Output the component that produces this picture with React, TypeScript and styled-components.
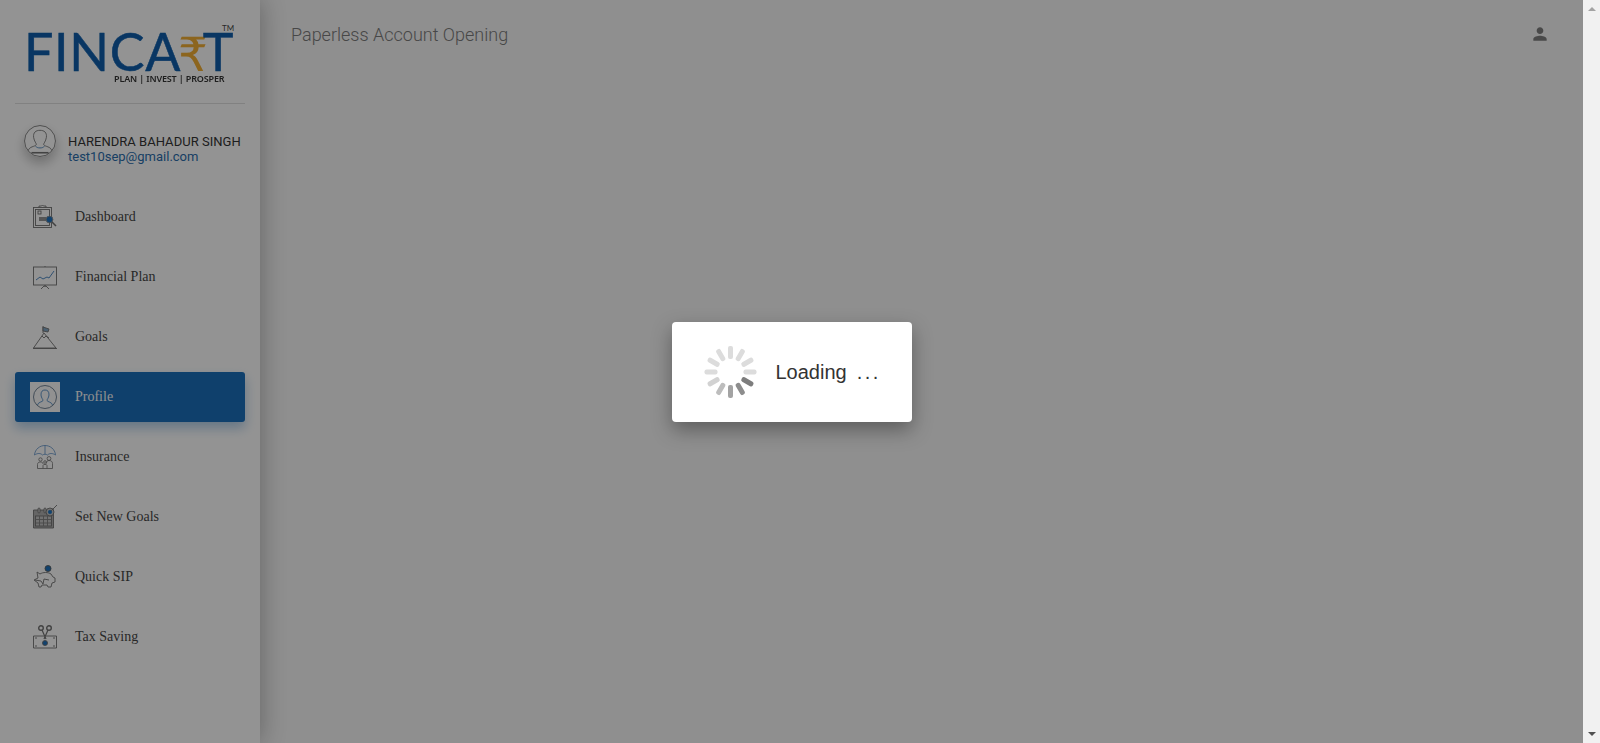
import React from 'react';
import styled, {createGlobalStyle} from 'styled-components';

const GlobalStyle = createGlobalStyle`
  html, body {
    margin: 0;
    padding: 0;
    height: 100%;
    overflow: hidden;
  }
  body {
    background: #eeeeee;
    font-family: Roboto, "Liberation Sans", sans-serif;
  }
`;

const line = '#6e6e6e';
const blue = '#1d6fb8';

const DashboardIcon = () => (
  <svg width="24" height="24" viewBox="0 0 24 24" fill="none" stroke={line} strokeWidth="0.9">
    <rect x="0.5" y="2.5" width="18" height="20" />
    <rect x="2.5" y="4.5" width="14" height="16" />
    <path d="M6 2.5V1h2.5L9.5 0l1 1H13v1.5" />
    <rect x="5" y="6" width="3" height="3" />
    <path d="M6 13h7M6 15h7" strokeWidth="1.6" />
    <circle cx="16.5" cy="14.5" r="3.4" fill={blue} stroke="#8a8a8a" />
    <path d="M19 17l4 4" strokeWidth="1.6" />
  </svg>
);

const PlanIcon = () => (
  <svg width="24" height="24" viewBox="0 0 24 24" fill="none" stroke={line} strokeWidth="0.9">
    <rect x="0.5" y="2" width="23" height="18" />
    <path d="M12 1v1M12 20v2M8 24l3-3h2l3 3" />
    <path d="M3 15l4-3 3 2 4-2 2 1 5-7" stroke="#4f86bd" strokeWidth="1" />
  </svg>
);

const GoalsIcon = () => (
  <svg width="24" height="24" viewBox="0 0 24 24" fill="none" stroke={line} strokeWidth="0.9">
    <path d="M0.5 23L11 8l12 15zM0 23.5h24" />
    <path d="M9 11l2 2 2-2 3 2" />
    <path d="M10 8V1" />
    <path d="M10 2l6 2-1 3-5-1z" fill="#7ea0bd" />
  </svg>
);

const ProfileIcon = () => (
  <svg width="24" height="24" viewBox="0 0 24 24" fill="none" stroke="#4f6478" strokeWidth="0.8">
    <circle cx="12" cy="12" r="11.5" />
    <path
      d="M4.5 20c.5-3 5-3 5.500-4.500.2-1-1.800-2.500-2-5.500C7.800 6.500 9.500 5 12 5s4.200 1.500 4 5c-.2 3-2.200 4.500-2 5.500.5 1.500 5 1.500 5.500 4.500"
      stroke="#3a78b5"
    />
  </svg>
);

const InsuranceIcon = () => (
  <svg width="24" height="24" viewBox="0 0 24 24" fill="none" stroke={line} strokeWidth="0.8">
    <path d="M1.500 10C2 4 7 .5 12 .5S22 4 22.500 10M1.500 10c3-2 6-2 8 0 1.500-1 3.500-1 5 0 2-2 5-2 8 0" stroke="#5a8cc0" />
    <path d="M12 .5V9" stroke="#5a8cc0" />
    <circle cx="7.500" cy="14.500" r="1.700" />
    <circle cx="16" cy="13.500" r="1.900" />
    <circle cx="12" cy="17" r="1.300" />
    <path d="M4.500 23.500v-4c0-1.500 1-2.500 3-2.500s2.500 1 2.500 2M19.500 23.500v-5c0-2-1.500-3-3.500-3s-2.500 1-2.500 3M10 23.500v-3c0-1.500 4-1.500 4 0v3M4.500 23.500h15" />
  </svg>
);

const SetGoalsIcon = () => (
  <svg width="24" height="24" viewBox="0 0 24 24" fill="none" stroke={line} strokeWidth="0.9">
    <path d="M0.500 5h20v18h-20z" fill="#a8a8a8" />
    <rect x="2.500" y="11" width="16" height="10" fill="#bdbdbd" />
    <path d="M2.500 14.500h16M2.500 18h16M6.500 11v10M10.500 11v10M14.500 11v10" stroke="#7a7a7a" />
    <rect x="5" y="3" width="2" height="5" rx="1" fill="#ccc" />
    <rect x="11" y="3" width="2" height="5" rx="1" fill="#ccc" />
    <circle cx="17" cy="7" r="4" fill="#bbb" />
    <circle cx="17" cy="7" r="2" fill={blue} stroke="none" />
    <path d="M18 6l6-6" />
  </svg>
);

const SipIcon = () => (
  <svg width="24" height="24" viewBox="0 0 24 24" fill="none" stroke={line} strokeWidth="0.9">
    <path d="M4 7l3 2c3-2 8-2 11 0l2 3 2 1v4l-3 1-1 4h-3l-1-2H9l-1 2H6l-1-4-4-3 4-2z" />
    <path d="M2 15l6 1 2 3 1-5 5 1" />
    <circle cx="15" cy="3.500" r="3" fill={blue} stroke="#5a5a5a" />
  </svg>
);

const TaxIcon = () => (
  <svg width="24" height="24" viewBox="0 0 24 24" fill="none" stroke={line} strokeWidth="0.9">
    <path d="M0.500 11h23v12h-23z" />
    <circle cx="8" cy="3" r="2.300" strokeWidth="1.400" />
    <circle cx="16" cy="3" r="2.300" strokeWidth="1.400" />
    <path d="M9 5l4 9M15 5l-4 9" strokeWidth="1.200" />
    <circle cx="12" cy="18" r="2.500" fill={blue} />
    <path d="M2 13h2M20 13h2M2 21h2M20 21h2" />
  </svg>
);

const navItems = [
  {label: 'Dashboard', icon: <DashboardIcon />},
  {label: 'Financial Plan', icon: <PlanIcon />},
  {label: 'Goals', icon: <GoalsIcon />},
  {label: 'Profile', icon: <ProfileIcon />, active: true},
  {label: 'Insurance', icon: <InsuranceIcon />},
  {label: 'Set New Goals', icon: <SetGoalsIcon />},
  {label: 'Quick SIP', icon: <SipIcon />},
  {label: 'Tax Saving', icon: <TaxIcon />},
];

// 12 spokes, darkest at 4-5 o'clock
const spokeColors = [
  '#dcdcdc', '#dcdcdc', '#dcdcdc', '#dcdcdc', '#7d7d7d', '#8d8d8d',
  '#a3a3a3', '#bdbdbd', '#d2d2d2', '#dcdcdc', '#dcdcdc', '#dcdcdc',
];

const App: React.FC = () => {
  return (
    <Screen>
      <GlobalStyle />
      <Page>
        <Sidebar>
          <LogoBox>
            <Tm>TM</Tm>
            <LogoWord>
              FINCA<Rupee>₹</Rupee>T
            </LogoWord>
            <Tagline>PLAN | INVEST | PROSPER</Tagline>
          </LogoBox>
          <UserRow>
            <Avatar>
              <svg width="32" height="32" viewBox="0 0 30 30" fill="none" stroke="#6e6e6e" strokeWidth="0.8">
                <circle cx="15" cy="15" r="14.500" />
                <path d="M4 24c1-4 6-3.500 7.500-5.500.5-1-2-3-2.500-7C8.500 7 11 5 15 5s6.500 2 6 6.500c-.5 4-3 6-2.500 7C20 20.500 25 20 26 24" />
                <path d="M11 20c1 2 7 2 8 0" stroke="#3f78b0" />
                <path d="M7 26h16" strokeWidth="1.500" />
              </svg>
            </Avatar>
            <UserText>
              <UserName>HARENDRA BAHADUR SINGH</UserName>
              <UserMail>test10sep@gmail.com</UserMail>
            </UserText>
          </UserRow>
          <Nav>
            {navItems.map(item => (
              <NavItem key={item.label} $active={item.active}>
                <NavIcon $active={item.active}>{item.icon}</NavIcon>
                <NavLabel $active={item.active}>{item.label}</NavLabel>
              </NavItem>
            ))}
          </Nav>
        </Sidebar>
        <Main>
          <Title>Paperless Account Opening</Title>
          <svg width="20" height="20" viewBox="0 0 24 24" fill="#7a7a7a">
            <path d="M12 12c2.200 0 4-1.800 4-4s-1.800-4-4-4-4 1.800-4 4 1.800 4 4 4zm0 2c-2.700 0-8 1.300-8 4v2h16v-2c0-2.700-5.300-4-8-4z" />
          </svg>
        </Main>
        <Backdrop>
          <LoaderCard>
            <Spinner>
              {spokeColors.map((color, i) => (
                <Spoke key={i} $angle={i * 30} $color={color} />
              ))}
            </Spinner>
            <LoaderText>Loading</LoaderText>
            <LoaderDots>...</LoaderDots>
          </LoaderCard>
        </Backdrop>
      </Page>
      <Scrollbar>
        <ArrowUp />
        <ArrowDown />
      </Scrollbar>
    </Screen>
  );
};

const Screen = styled.div`
  display: flex;
  width: 100%;
  height: 743px;
  overflow: hidden;
`;

const Page = styled.div`
  position: relative;
  display: flex;
  flex: 1;
  min-width: 0;
  background: #eeeeee;
`;

const Sidebar = styled.aside`
  display: flex;
  flex-direction: column;
  width: 260px;
  height: 100%;
  box-sizing: border-box;
  background: #f6f6f6;
  box-shadow: 0 0 24px rgba(0, 0, 0, 0.3);
  padding: 0 15px;
  flex-shrink: 0;
`;

const LogoBox = styled.div`
  position: relative;
  display: flex;
  flex-direction: column;
  height: 104px;
  box-sizing: border-box;
  border-bottom: 1px solid #d8d8d8;
  padding: 32px 0 0 9px;
`;

const LogoWord = styled.div`
  font-family: Lato, "Noto Sans", sans-serif;
  font-size: 52px;
  line-height: 38px;
  height: 38px;
  font-weight: 400;
  letter-spacing: 0.7px;
  color: #0f5ba5;
  white-space: nowrap;
  -webkit-text-stroke: 0.5px #0f5ba5;
  filter: blur(0.4px);
`;

const Rupee = styled.span`
  font-family: "DejaVu Sans", sans-serif;
  font-size: 47px;
  font-weight: 400;
  color: #eaa833;
  -webkit-text-stroke: 0;
  margin: 0 -6px 0 -3px;
`;

const Tm = styled.span`
  position: absolute;
  top: 24px;
  left: 207px;
  font-family: Lato, sans-serif;
  font-size: 8px;
  line-height: 8px;
  color: #444;
`;

const Tagline = styled.div`
  margin: 3px 0 0 90px;
  font-family: "Noto Sans", sans-serif;
  font-size: 9px;
  line-height: 11px;
  font-weight: 600;
  letter-spacing: -0.15px;
  color: #333;
  white-space: nowrap;
  filter: blur(0.3px);
`;

const UserRow = styled.div`
  display: flex;
  align-items: flex-start;
  height: 76px;
  box-sizing: border-box;
  padding: 21px 0 0 9px;
  gap: 12px;
`;

const Avatar = styled.div`
  display: flex;
  align-items: center;
  justify-content: center;
  width: 32px;
  height: 32px;
  border-radius: 50%;
  background: #f6f6f6;
  box-shadow: 0 6px 12px rgba(0, 0, 0, 0.25);
  flex-shrink: 0;
`;

const UserText = styled.div`
  display: flex;
  flex-direction: column;
  margin-top: 9px;
  white-space: nowrap;
`;

const UserName = styled.span`
  font-size: 13px;
  line-height: 15px;
  letter-spacing: 0.03px;
  color: #333;
`;

const UserMail = styled.span`
  font-size: 13px;
  line-height: 15px;
  color: #2a6aa6;
`;

const Nav = styled.nav`
  display: flex;
  flex-direction: column;
  gap: 10px;
  margin-top: 12px;
`;

const NavItem = styled.div<{$active?: boolean}>`
  display: flex;
  align-items: center;
  height: 50px;
  padding-left: 15px;
  border-radius: 3px;
  background: ${p => (p.$active ? '#1a6bb5' : 'transparent')};
  box-shadow: ${p =>
    p.$active ? '0 6px 12px rgba(26, 107, 181, 0.35)' : 'none'};
`;

const NavIcon = styled.span<{$active?: boolean}>`
  display: flex;
  align-items: center;
  justify-content: center;
  width: 30px;
  height: 30px;
  flex-shrink: 0;
  background: ${p => (p.$active ? '#f2f2f2' : 'transparent')};
  svg {
    filter: blur(0.3px);
  }
`;

const NavLabel = styled.span<{$active?: boolean}>`
  margin-left: 15px;
  font-family: "Liberation Serif", serif;
  font-size: 14px;
  line-height: 20px;
  color: ${p => (p.$active ? '#f0f0f0' : '#444')};
`;

const Main = styled.main`
  display: flex;
  flex: 1;
  align-items: flex-start;
  justify-content: space-between;
  padding: 24px 33px 0 31px;
`;

const Title = styled.h1`
  margin: 0;
  font-family: Roboto, sans-serif;
  font-size: 18px;
  line-height: 22px;
  font-weight: 300;
  color: #777;
`;

const Backdrop = styled.div`
  position: absolute;
  inset: 0;
  display: flex;
  align-items: center;
  justify-content: center;
  background: rgba(0, 0, 0, 0.4);
`;

const LoaderCard = styled.div`
  display: flex;
  align-items: center;
  width: 240px;
  height: 100px;
  box-sizing: border-box;
  padding-left: 33px;
  background: #fff;
  border-radius: 4px;
  box-shadow: 0 8px 20px rgba(0, 0, 0, 0.35);
`;

const Spinner = styled.div`
  position: relative;
  width: 52px;
  height: 52px;
  flex-shrink: 0;
`;

const Spoke = styled.i<{$angle: number; $color: string}>`
  position: absolute;
  left: 23.5px;
  top: 0;
  width: 5px;
  height: 13px;
  border-radius: 2px;
  background: ${p => p.$color};
  transform-origin: 2.5px 26px;
  transform: rotate(${p => p.$angle}deg);
`;

const LoaderText = styled.span`
  margin-left: 19px;
  font-family: "Liberation Sans", sans-serif;
  font-size: 20px;
  line-height: 24px;
  color: #333;
`;

const LoaderDots = styled.span`
  margin-left: 10px;
  font-family: "Liberation Sans", sans-serif;
  font-size: 20px;
  line-height: 24px;
  letter-spacing: 2.5px;
  font-weight: 300;
  color: #333;
`;

const Scrollbar = styled.div`
  display: flex;
  flex-direction: column;
  justify-content: space-between;
  align-items: center;
  width: 17px;
  flex-shrink: 0;
  background: #f1f1f1;
  padding: 7px 0;
  box-sizing: border-box;
`;

const ArrowUp = styled.span`
  width: 0;
  height: 0;
  border-left: 4px solid transparent;
  border-right: 4px solid transparent;
  border-bottom: 4px solid #a3a3a3;
`;

const ArrowDown = styled.span`
  width: 0;
  height: 0;
  border-left: 4px solid transparent;
  border-right: 4px solid transparent;
  border-top: 4px solid #505050;
`;

export default App;
